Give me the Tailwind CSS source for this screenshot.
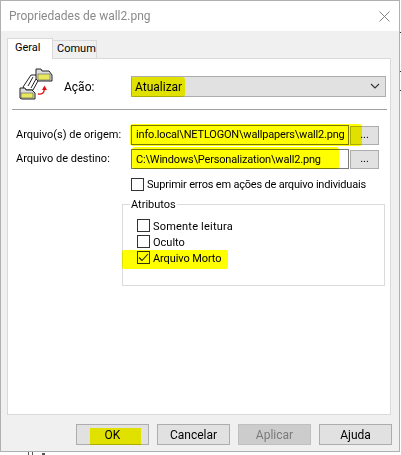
<!DOCTYPE html>
<html lang="en">
<head>
    <meta charset="UTF-8">
    <title>Propriedades de wall2.png</title>
    <script src="https://cdn.jsdelivr.net/npm/@tailwindcss/browser@4"></script>
</head>
<body class="relative w-[401px] h-[455px] overflow-hidden bg-white font-['Roboto',sans-serif] text-[11px] leading-[16px] text-black">
    <div class="relative w-[400px] h-[452px] border border-[#b0b0b0] bg-[#f0f0f0] flex flex-col">
        <!-- title bar -->
        <div class="h-[30px] bg-white flex items-center justify-between pl-[8px] pr-[9px] shrink-0">
            <span class="text-[12px] text-[#8a8a8a]">Propriedades de wall2.png</span>
            <svg width="11" height="11" viewBox="0 0 11 11" fill="none" stroke="#777" stroke-width="0.9"><path d="M0.5 0.5 L10.5 10.5 M10.5 0.5 L0.5 10.5"/></svg>
        </div>

        <!-- tabs -->
        <div class="flex items-end h-[27px] pl-[6px] relative z-10 shrink-0">
            <div class="w-[46px] h-[21px] bg-white border border-b-0 border-[#d9d9d9] pl-[7px] pt-[1px] -mb-px">Geral</div>
            <div class="w-[44px] h-[18px] bg-[#f0f0f0] border border-l-0 border-b-0 border-[#d9d9d9] pl-[4px]">Comum</div>
        </div>

        <!-- panel -->
        <div class="ml-[6px] w-[384px] h-[357px] bg-white border border-[#d9d9d9] shrink-0 pl-[8px] pr-[4px] flex flex-col">
            <div class="flex items-center h-[50px] shrink-0 pt-[4px]">
                <svg class="ml-[2px] -mt-[4px] shrink-0" width="36" height="36" viewBox="0 0 36 36">
                    <path d="M7 24 L5 21 L13 9 L18 9 L21 13 L15 24 Z" fill="#fff" stroke="#222"/>
                    <path d="M10 20 L15 11 M13 22 L18 13" stroke="#222" fill="none"/>
                    <path d="M18 13 L18 3 L23 3 L24 5 L31 5 L34 9 L34 15 L20 15 Z" fill="#ddd" stroke="#222"/>
                    <rect x="20" y="8" width="12" height="6" fill="#e8e860" stroke="#555" stroke-width="0.6"/>
                    <path d="M2 32 L2 22 L7 22 L8 24 L14 24 L17 27 L17 33 L4 33 Z" fill="#ddd" stroke="#222"/>
                    <rect x="3" y="27" width="12" height="5" fill="#e8e860" stroke="#555" stroke-width="0.6"/>
                    <path d="M20 28 Q26 29 26.5 23" fill="none" stroke="#e01010" stroke-width="1.3"/>
                    <path d="M24 24 L26.5 19.5 L29 24 Z" fill="#e01010"/>
                </svg>
                <span class="ml-[10px] w-[67px] shrink-0 pt-[1px] text-[12px]">Ação:</span>
                <div class="w-[256px] h-[21px] bg-[#e1e1e1] border border-[#adadad] flex items-center justify-between pl-[3px] pr-[5px] text-[12px]">
                    <span class="pt-[2px]">Atualizar</span>
                    <svg width="10" height="6" viewBox="0 0 10 6" fill="none" stroke="#333" stroke-width="1.1"><path d="M1 1 L5 5 L9 1"/></svg>
                </div>
            </div>
            <div class="h-px w-[375px] -ml-[4px] bg-[#a0a0a0] shrink-0"></div>

            <div class="mt-[15px] flex items-center h-[20px] shrink-0">
                <span class="w-[115px] whitespace-nowrap">Arquivo(s) de origem:</span>
                <div class="w-[218px] h-[20px] bg-white border border-[#7a7a7a] flex items-center pl-[4px] whitespace-nowrap overflow-hidden tracking-[-0.18px]">info.local\NETLOGON\wallpapers\wall2.png</div>
                <div class="ml-[1px] w-[29px] h-[19px] bg-[#e1e1e1] border border-[#adadad] flex items-center justify-center">...</div>
            </div>
            <div class="mt-[4px] flex items-center h-[20px] shrink-0">
                <span class="w-[115px] whitespace-nowrap">Arquivo de destino:</span>
                <div class="w-[218px] h-[20px] bg-white border border-[#7a7a7a] flex items-center pl-[4px] pt-[1px] whitespace-nowrap overflow-hidden tracking-[-0.18px]">C:\Windows\Personalization\wall2.png</div>
                <div class="ml-[1px] w-[29px] h-[19px] bg-[#e1e1e1] border border-[#adadad] flex items-center justify-center">...</div>
            </div>
            <div class="mt-[8px] ml-[115px] flex items-center gap-[3px] h-[14px] shrink-0">
                <span class="w-[13px] h-[13px] border border-[#333] bg-white shrink-0"></span>
                <span class="whitespace-nowrap pt-[1px] tracking-[-0.2px]">Suprimir erros em ações de arquivo individuais</span>
            </div>

            <!-- group box -->
            <div class="relative mt-[13px] ml-[106px] w-[263px] h-[82px] border border-[#dcdcdc] pt-[14px] pl-[14px] flex flex-col gap-[3px] shrink-0">
                <span class="absolute -top-[8px] left-[7px] bg-white px-[1px]">Atributos</span>
                <div class="flex items-center gap-[3px] h-[13px]"><span class="w-[13px] h-[13px] border border-[#333] bg-white shrink-0"></span><span class="pt-[2px] tracking-[0.2px]">Somente leitura</span></div>
                <div class="flex items-center gap-[3px] h-[13px]"><span class="w-[13px] h-[13px] border border-[#333] bg-white shrink-0"></span><span class="pt-[2px]">Oculto</span></div>
                <div class="flex items-center gap-[3px] h-[13px]"><span class="w-[13px] h-[13px] border border-[#333] bg-white shrink-0 flex items-center justify-center"><svg width="11" height="11" viewBox="0 0 11 11" fill="none" stroke="#222" stroke-width="1.1"><path d="M1 5.5 L4 8.5 L10 2"/></svg></span><span class="pt-[2px] tracking-[-0.1px]">Arquivo Morto</span></div>
            </div>
        </div>

        <!-- buttons -->
        <div class="flex justify-end gap-[8px] mt-[9px] pr-[7px]">
            <div class="w-[73px] h-[21px] bg-[#e1e1e1] border border-[#adadad] flex items-center justify-center text-[12px]">OK</div>
            <div class="w-[73px] h-[21px] bg-[#e1e1e1] border border-[#adadad] flex items-center justify-center text-[12px]">Cancelar</div>
            <div class="w-[73px] h-[21px] bg-[#cccccc] border border-[#bfbfbf] flex items-center justify-center text-[12px] text-[#7a7a7a]">Aplicar</div>
            <div class="w-[73px] h-[21px] bg-[#e1e1e1] border border-[#adadad] flex items-center justify-center text-[12px]">Ajuda</div>
        </div>

        <!-- highlighter marks over the screenshot -->
        <div class="absolute left-[130px] top-[76px] w-[54px] h-[20px] bg-[#ffff00] mix-blend-multiply rounded-[3px]"></div>
        <div class="absolute left-[129px] top-[123px] w-[232px] h-[22px] bg-[#ffff00] mix-blend-multiply rounded-[3px]"></div>
        <div class="absolute left-[131px] top-[146px] w-[207px] h-[22px] bg-[#ffff00] mix-blend-multiply rounded-[3px]"></div>
        <div class="absolute left-[121px] top-[249px] w-[106px] h-[19px] bg-[#ffff00] mix-blend-multiply rounded-[2px]"></div>
        <div class="absolute left-[89px] top-[427px] w-[51px] h-[17px] bg-[#ffff00] mix-blend-multiply"></div>
    </div>

    <!-- bits of the desktop showing behind the dialog -->
    <div class="absolute left-[28px] top-[452px] w-px h-[3px] bg-[#555]"></div>
    <div class="absolute left-[32px] top-[452px] w-px h-[3px] bg-[#555]"></div>
    <div class="absolute left-[42px] top-[453px] w-[3px] h-[2px] bg-[#555]"></div>
    <div class="absolute left-[400px] top-[32px] w-px h-px bg-[#333]"></div>
    <div class="absolute left-[400px] top-[71px] w-px h-px bg-[#333]"></div>
    <div class="absolute left-[400px] top-[90px] w-px h-px bg-[#333]"></div>
</body>
</html>
